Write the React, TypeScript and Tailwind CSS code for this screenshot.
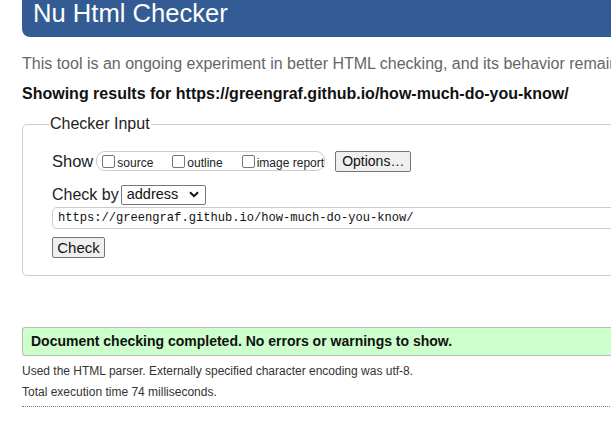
function ChevronDown() {
  return (
    <svg width="10" height="7" viewBox="0 0 10 7" className="shrink-0">
      <path d="M1 1.2 5 5.2 9 1.2" fill="none" stroke="#111" strokeWidth="2" />
    </svg>
  );
}

function Checkbox({ label }: { label: string }) {
  return (
    <label className="flex items-center whitespace-nowrap">
      <span className="w-[13px] h-[13px] border border-[#767676] rounded-[2px] bg-white mr-[2px] shrink-0" />
      <span className="text-[12px] text-[#222] leading-none mt-[3px]">{label}</span>
    </label>
  );
}

export default function App() {
  return (
    <div className="w-[611px] h-[432px] overflow-hidden bg-white font-['Liberation_Sans',Arial,sans-serif] text-[#111]">
      <div className="ml-[22px] w-[640px]">
        {/* Header */}
        <div className="h-[37px] bg-[#335c94] rounded-bl-[8px] pl-[11px] flex items-end">
          <h1 className="text-white text-[25.6px] leading-[27px] pb-[10px]">Nu Html Checker</h1>
        </div>

        {/* Intro */}
        <p className="mt-[17px] text-[16px] leading-[20px] text-[#666] whitespace-nowrap">
          This tool is an ongoing experiment in better HTML checking, and its behavior remains subject to change
        </p>
        <p className="mt-[10px] text-[16px] leading-[20px] font-bold whitespace-nowrap">
          Showing results for https://greengraf.github.io/how-much-do-you-know/
        </p>

        {/* Checker Input */}
        <fieldset className="mt-[10px] border border-[#ccc] rounded-[5px] pl-[29px] pr-0 pb-[15px]">
          <legend className="ml-[-3px] px-[1px] text-[16px] leading-[20px] text-[#222]">Checker Input</legend>

          <div className="mt-[16px] flex items-center h-[22px]">
            <span className="text-[16.5px] text-[#222] mr-[3px]">Show</span>
            <div className="w-[229px] h-[20px] border border-[#ccc] rounded-[9px] flex items-center pl-[5px] gap-[19px]">
              <Checkbox label="source" />
              <Checkbox label="outline" />
              <Checkbox label="image report" />
            </div>
            <button className="ml-[10px] w-[76px] h-[21px] bg-[#efefef] border border-[#767676] rounded-[2px] text-[14px] text-[#111] leading-none">
              Options…
            </button>
          </div>

          <div className="mt-[12px] flex items-center h-[21px]">
            <span className="text-[16px] text-[#222] mr-[2px]">Check by</span>
            <div className="w-[85px] h-[20px] border border-[#767676] rounded-[2px] flex items-center justify-between pl-[5px] pr-[6px]">
              <span className="text-[14.5px] leading-none">address</span>
              <ChevronDown />
            </div>
          </div>

          <div className="mt-[2px] h-[22px] border border-[#ccc] rounded-[5px] flex items-center pl-[5px] mr-[-10px]">
            <span className="font-['Liberation_Mono','DejaVu_Sans_Mono',monospace] text-[12.1px] text-[#111] leading-none">
              https://greengraf.github.io/how-much-do-you-know/
            </span>
          </div>

          <button className="mt-[8px] w-[53px] h-[21px] bg-[#efefef] border border-[#767676] rounded-[2px] text-[15px] text-[#111] leading-none">
            Check
          </button>
        </fieldset>

        {/* Result */}
        <div className="mt-[51px] h-[29px] bg-[#ccffcc] border-y border-l border-[#bbb] rounded-l-[3px] flex items-center pl-[8px]">
          <span className="text-[14px] font-bold text-[#111] whitespace-nowrap">
            Document checking completed. No errors or warnings to show.
          </span>
        </div>

        <p className="mt-[8px] text-[12px] leading-[14px] text-[#333] whitespace-nowrap">
          Used the HTML parser. Externally specified character encoding was utf-8.
        </p>
        <p className="mt-[7px] text-[12px] leading-[14px] text-[#333] whitespace-nowrap">
          Total execution time 74 milliseconds.
        </p>
        <div className="mt-[7px] border-t border-dotted border-[#777]" />
      </div>
    </div>
  );
}
